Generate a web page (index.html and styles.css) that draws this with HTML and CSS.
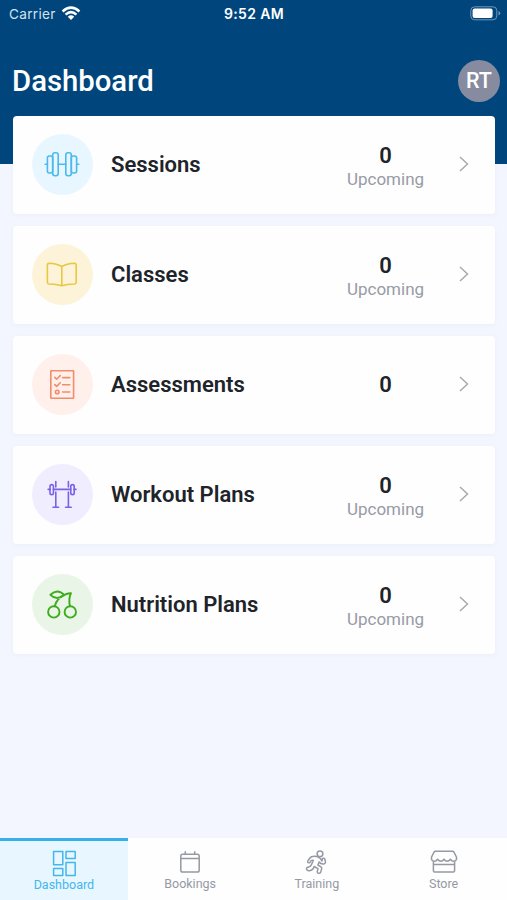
FILE: index.html
```html
<!DOCTYPE html>
<html lang="en">
<head>
<meta charset="utf-8">
<title>Dashboard</title>
<link rel="stylesheet" href="styles.css">
</head>
<body>
<div class="app">
  <div class="status">
    <div class="carrier"><span>Carrier</span>
      <svg width="20" height="15" viewBox="0 0 20 15" fill="none" stroke="#fff" stroke-width="2.6"><path d="M1.6 5.4Q10-2 18.4 5.4M4.6 8.6Q10 3.8 15.4 8.6"/><path d="M6.8 10.7Q10 8 13.2 10.7L10 14z" fill="#fff" stroke="none"/></svg>
    </div>
    <div class="time">9:52 AM</div>
    <svg class="battery" width="31" height="15" viewBox="0 0 31 15"><rect x=".8" y=".8" width="26" height="13" rx="3.8" fill="none" stroke="#6f96b9"/><rect x="2.6" y="2.6" width="20" height="9.4" rx="2" fill="#fff"/><path d="M28.5 5v4.5q1.8-.8 1.8-2.2T28.5 5z" fill="#6f96b9"/></svg>
  </div>
  <header class="header">
    <h1>Dashboard</h1>
    <div class="avatar">RT</div>
  </header>
  <main class="cards">
    <a class="card">
      <span class="icon sessions"><svg viewBox="0 0 61 61"><rect x="15.4" y="22" width="5.3" height="17" rx="2"/><rect x="20.7" y="18.8" width="5.5" height="23" rx="2.2"/><rect x="33.8" y="18.8" width="5.5" height="23" rx="2.2"/><rect x="39.3" y="22" width="5.3" height="17" rx="2"/><path d="M26.2 30.2h7.6M13.2 30.2h2.2M44.6 30.2h2.2"/></svg></span>
      <span class="name">Sessions</span>
      <span class="count"><b>0</b><small>Upcoming</small></span>
      <svg class="chevron" viewBox="0 0 10 16"><path d="M1 1l7.5 7L1 15"/></svg>
    </a>
    <a class="card">
      <span class="icon classes"><svg viewBox="0 0 61 61"><path d="M29.8 22.5q-5-2.8-12.8-3.2-1.6 0-1.6 1.6v17.4q0 1.6 1.6 1.7 7.8.2 12.8 1.8 5-1.6 12.8-1.8 1.6-.1 1.6-1.7V20.9q0-1.6-1.6-1.6-7.8.4-12.8 3.2zv19.3"/></svg></span>
      <span class="name">Classes</span>
      <span class="count"><b>0</b><small>Upcoming</small></span>
      <svg class="chevron" viewBox="0 0 10 16"><path d="M1 1l7.5 7L1 15"/></svg>
    </a>
    <a class="card">
      <span class="icon assessments"><svg viewBox="0 0 61 61"><rect x="18.8" y="16.8" width="22.8" height="27.4" rx=".5"/><path d="M22.8 23.4l1.8 1.8 3.7-3.6M22.8 30.6l1.8 1.8 3.7-3.6M30.6 23.6h7.2M30.6 30.8h7.2M30.6 38h7.2"/><circle cx="25.2" cy="38" r="1.8"/></svg></span>
      <span class="name">Assessments</span>
      <span class="count"><b>0</b></span>
      <svg class="chevron" viewBox="0 0 10 16"><path d="M1 1l7.5 7L1 15"/></svg>
    </a>
    <a class="card">
      <span class="icon workout"><svg viewBox="0 0 61 61"><path d="M23.8 17.5v5.5M36.4 17.5v5.5M23.8 28v15M36.4 28v15M21 43.2h5.6M33.6 43.2h5.6M21.5 25.4h17.2M16.2 25.4h2M42 25.4h2"/><rect x="18" y="20.6" width="3.4" height="10" rx="1.7"/><rect x="38.8" y="20.6" width="3.4" height="10" rx="1.7"/></svg></span>
      <span class="name">Workout Plans</span>
      <span class="count"><b>0</b><small>Upcoming</small></span>
      <svg class="chevron" viewBox="0 0 10 16"><path d="M1 1l7.5 7L1 15"/></svg>
    </a>
    <a class="card">
      <span class="icon nutrition"><svg viewBox="0 0 61 61"><circle cx="21.8" cy="37.9" r="5.7"/><circle cx="38.3" cy="37.9" r="5.7"/><path d="M18.4 20.8q7-6.8 14 .2-7.6 6.2-14-.2zM32.4 21q2.8-2 6.6-1.8-2.8 5.8-1 13M32.4 21q-7.4 2.8-9.6 11.2"/></svg></span>
      <span class="name">Nutrition Plans</span>
      <span class="count"><b>0</b><small>Upcoming</small></span>
      <svg class="chevron" viewBox="0 0 10 16"><path d="M1 1l7.5 7L1 15"/></svg>
    </a>
  </main>
  <nav class="tabs">
    <a class="tab active"><svg viewBox="0 0 30 28"><path d="M4.6 2.6h9.2v13.2H4.6zM17 2.6h9.2v7H17zM4.6 19.6h9.2v7H4.6zM17 13.4h9.2v13.2H17z"/></svg><span>Dashboard</span></a>
    <a class="tab"><svg viewBox="0 0 30 28"><rect x="5.8" y="5.3" width="18.4" height="17.8" rx="1.8"/><path d="M5.8 9.6h18.4M10.3 2.2v3.1M19.7 2.2v3.1"/></svg><span>Bookings</span></a>
    <a class="tab"><svg viewBox="0 0 30 28"><circle cx="18" cy="4.8" r="2.9"/><path d="M9.2 7.7q4.2-1 7.1.4 2.7 1.2 3.6 4l.6-2.4q1.7-1.2 2.4.5l.6 3.2q-.2 1.5-1.8 1.7-3.2.2-4.6-2.1l-1.2 3 3.1 1.8q1 .8.6 2.3l-1 3.3q-1.2 1.4-3 .4-.7-.7-.1-2l.5-2.2-3.9-2.1q-.9 3.8-4.7 4.2-2.4.2-2.9-1.6-.1-1.9 2.2-2 1.8-.1 2.5-2l2.1-4.6q-1.4-.5-2.2.2l-1.1 1.7q-1.5 1-2.3-.3-.3-.8.8-2 1.1-2.1 2.2-2.6z"/></svg><span>Training</span></a>
    <a class="tab"><svg viewBox="0 0 30 28"><path d="M6.6 2.2h16.8q1 0 1.5.8l2.6 5.2v2q-1 2.4-3.3 2-1.8-.2-2.8-2-1.4 2-3.2 2t-3.2-2q-1.4 2-3.2 2t-3.2-2q-1 1.8-2.8 2-2.3.4-3.3-2v-2l2.6-5.2q.5-.8 1.5-.8zM4.4 12.2v9.6q0 1.3 1.3 1.3h18.6q1.3 0 1.3-1.3v-9.6M4.4 15.6h21.2"/></svg><span>Store</span></a>
  </nav>
</div>
</body>
</html>
```
FILE: styles.css
```css
* { box-sizing: border-box; }
body { margin: 0; font-family: Roboto, "Liberation Sans", sans-serif; }
.app {
  height: 900px;
  display: flex;
  flex-direction: column;
  background: linear-gradient(#00467d 164px, #f3f6fe 164px);
}
.status {
  height: 28px;
  padding: 0 6px 0 9px;
  display: grid;
  grid-template-columns: 1fr auto 1fr;
  align-items: center;
  color: #fff;
  font: 14px/28px Inter, sans-serif;
}
.carrier { display: flex; align-items: center; gap: 5px; color: #d3e2f1; font-size: 13.6px; letter-spacing: .3px; }
.carrier svg { margin-top: -2px; }
.time { margin-right: 2px; font-size: 14px; font-weight: 600; letter-spacing: .35px; }
.battery { justify-self: end; margin-top: -1px; }
.header {
  height: 88px;
  padding: 18px 7px 0 12px;
  display: flex;
  align-items: center;
  justify-content: space-between;
}
h1 { margin: 0; color: #fff; font-size: 29.3px; line-height: 34px; font-weight: 500; }
.avatar {
  width: 42px;
  height: 42px;
  border-radius: 50%;
  background: #878b9f;
  color: #fff;
  font-size: 21.5px;
  font-weight: 500;
  line-height: 41px;
  text-align: center;
}
.cards { flex: 1; padding: 0 12px 0 13px; display: flex; flex-direction: column; gap: 12px; }
.card {
  height: 98px;
  padding: 0 26.5px 1px 19px;
  display: flex;
  align-items: center;
  border-radius: 4px;
  background: #fefefe;
  box-shadow: 0 1px 4px rgba(80, 100, 180, .05);
}
.icon { width: 61px; height: 61px; border-radius: 50%; margin-right: 18px; }
.icon svg { display: block; fill: none; stroke: currentColor; stroke-width: 1.6; stroke-linecap: round; stroke-linejoin: round; }
.sessions { color: #4bb9ee; background: #e8f7ff; }
.classes { color: #e8c840; background: #fcf3d9; }
.assessments { color: #f48b69; background: #fff0ec; }
.workout { color: #7b61e4; background: #f0edff; }
.nutrition { color: #3eac1e; background: #e9f5e6; }
.nutrition svg { stroke-width: 1.9; }
.name { flex: 1; color: #202329; font-size: 22px; line-height: 28px; font-weight: 600; }
.count { width: 90px; margin-right: 28px; display: flex; flex-direction: column; align-items: center; }
.count b { color: #202329; font-size: 22px; line-height: 24px; font-weight: 600; }
.count b:not(:last-child) { margin-top: 5px; }
.count small { color: #989ba5; font-size: 17px; line-height: 22px; }
.chevron { width: 10px; height: 16px; margin-bottom: 1px; fill: none; stroke: #a5a7ac; stroke-width: 1.4; }
.tabs { height: 62px; display: grid; grid-template-columns: repeat(4, 1fr); background: #fefefe; }
.tab {
  padding-top: 11px;
  display: flex;
  flex-direction: column;
  align-items: center;
  color: #9699a3;
  font-size: 12.5px;
  line-height: 16px;
}
.tab svg { width: 30px; height: 28px; margin-bottom: -1px; fill: none; stroke: currentColor; stroke-width: 1.5; stroke-linejoin: round; }
.active { padding-top: 8px; margin-right: -1px; border-top: 3px solid #36b0e9; background: #e7f6ff; color: #43b7ec; }
.active svg { margin-bottom: 0; }
```
